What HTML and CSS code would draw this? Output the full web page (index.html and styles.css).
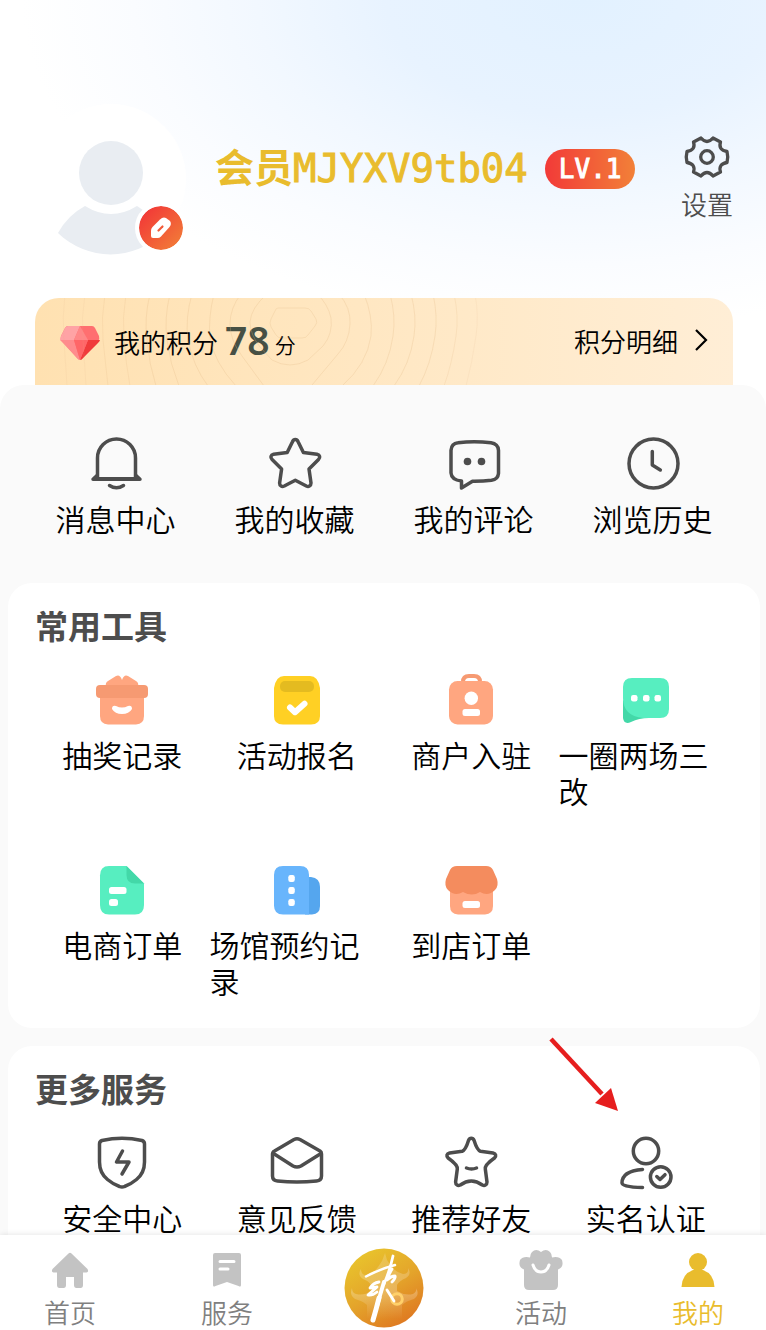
FILE: index.html
```
<!DOCTYPE html>
<html lang="zh-CN">
<head>
  <meta charset="UTF-8">
  <meta name="viewport" content="width=device-width, initial-scale=1.0">
  <title>我的</title>
  <link rel="stylesheet" href="styles.css">
</head>
<body>
  <main class="page">
    <header class="profile">
      <div class="avatar">
        <svg class="avatar-img" viewBox="0 0 150 150">
          <circle cx="75" cy="75" r="75" fill="#fff"/>
          <g fill="#e9edf2">
            <circle cx="75" cy="69" r="32"/>
            <path d="M49 102q26 16 52 0q14 8 26 27a75 75 0 0 1-105 0q10-18 27-27z"/>
          </g>
        </svg>
        <button class="edit" aria-label="编辑">
          <svg viewBox="0 0 44 44" width="44" height="44">
            <path d="M12 24.500q0-2 1.500-3.500L21 13.500q3-3 6-1.500l4 3q2 3-.5 6L22 30.500Q20.500 32 18.500 32H14q-2 0-2-2z" fill="#fff"/>
            <path d="M19.500 24.500l4-4" stroke="#f25a38" stroke-width="2.200" stroke-linecap="round"/>
          </svg>
        </button>
      </div>
      <h1 class="name"><b>会员</b>MJYXV9tb04</h1>
      <span class="level">LV.1</span>
      <button class="settings">
        <svg viewBox="0 0 46 46" width="46" height="46" fill="none" stroke="#4d4d4d" stroke-width="3.300" stroke-linejoin="round">
          <path d="M17 4Q23 11 29 4L36.500 8Q34 16 43 17.500Q44.500 23 43 28.500Q34 30 36.500 38L29 42Q23 35 17 42L9.500 38Q12 30 3 28.500Q1.500 23 3 17.500Q12 16 9.500 8Z"/>
          <circle cx="23" cy="23" r="6.300"/>
        </svg>
        设置
      </button>
    </header>

    <section class="points">
      <svg class="rings" viewBox="0 0 698 87" width="698" height="87" fill="none" stroke="#e2b988" stroke-opacity=".28">
        <path d="M243 10h27q4 0 6 3l5 8q2 4-1 7l-7 9q-2 3-6 3h-20q-4 0-6-3l-5-8q-2-4 0-8l4-8q1-3 3-3z"/>
        <path d="M232-4q-16 14-17 28 0 12 10 25l12 13q18 10 36 0l15-14q10-12 8-28-3-14-14-24"/>
        <path d="M206-4q-11 14-11 30 0 16 12 32l22 30M304-4q12 14 11 30-1 18-12 30l-26 31"/>
        <path d="M179-4q-6 24-4 44 4 24 26 48M329-4q9 22 7 42-4 28-29 50"/>
        <path d="M157-4q-7 24-4 46 5 26 20 46M355-4q6 22 3 42-4 28-20 50"/>
        <path d="M135-4q-6 24-3 46 3 24 12 46M376-4q6 22 3 42-4 28-20 50M115-4q-6 24-3 46 2 24 9 46M398-4q5 22 2 42-4 28-16 50"/>
        <path d="M91-4q-4 24-2 46 2 24 6 46M419-4q5 22 2 42-4 28-12 50M70-4q-4 24-2 46l5 46" stroke-opacity=".2"/>
        <path d="M440-4q4 22 1 42-4 28-10 50M50-4q-4 24-2 46l3 46M30-4q-3 24-1 46l3 46" stroke-opacity=".12"/>
      </svg>
      <svg class="gem" viewBox="0 0 40 34" width="40" height="34">
        <path d="M8 0h24q2 0 3 2l4 8q1 3-1 5L23 32q-3 3-6 0L2 15Q0 13 1 10l4-8q1-2 3-2z" fill="#ff6f70"/>
        <path d="M8 0h12l-6 14H0q0-2 1-4l4-8q1-2 3-2z" fill="#ffa3a5"/>
        <path d="M20 0l8 14H14z" fill="#ff8788"/>
        <path d="M0 14h14l6 20q-2 0-3-2L2 16z" fill="#ff8b8d"/>
        <path d="M28 14h12q0 1-2 3L23 32q-1 2-3 2z" fill="#f03b3b"/>
        <path d="M14 14h14l-8 20z" fill="#ff6668"/>
      </svg>
      <span>我的积分</span>
      <strong class="score">78</strong>
      <small class="unit">分</small>
      <a class="detail" href="#">积分明细
        <svg viewBox="0 0 14 24" width="14" height="24" fill="none" stroke="#000" stroke-width="2.200"><path d="M2 2l10 10L2 22"/></svg>
      </a>
    </section>

    <div class="content">
      <nav class="grid quick">
        <a class="item" href="#">
          <svg class="icon line" viewBox="0 0 56 56">
            <path d="M9.500 42V22a19 19 0 0 1 38 0v20"/>
            <path d="M9 39.500l-3.500 3.200h46L48 39.500M5 43.200h47"/>
            <path d="M21.500 49.500q7 4.500 14 0"/>
          </svg>
          <span>消息中心</span>
        </a>
        <a class="item" href="#">
          <svg class="icon line" viewBox="0 0 56 56">
            <path d="M25.500 5.700C26.800 2.700 29.800 2.700 31.100 5.700L36.400 16.500L50 18.300C53 19 53.500 21.500 51.500 23.500L42 33L44 47C44 50.200 41.500 51 39.300 50L28.300 44.300L17.300 50C15 51 12.600 50.200 12.600 47L14.600 33L5.100 23.500C3.100 21.500 3.600 19 6.600 18.300L20.200 16.500Z"/>
          </svg>
          <span>我的收藏</span>
        </a>
        <a class="item" href="#">
          <svg class="icon line" viewBox="0 0 56 56">
            <path d="M12 6.800q16-2.200 33 0 7 1 7.500 7.500v23q-.5 6-7 7-9 1-19 .9L15.500 52v-7Q5.500 44 5 37V14.300Q5.500 7.500 12 6.800z"/>
            <circle class="dot" cx="21.500" cy="25.500" r="3.800"/>
            <circle class="dot" cx="35.500" cy="25.500" r="3.800"/>
          </svg>
          <span>我的评论</span>
        </a>
        <a class="item" href="#">
          <svg class="icon line" viewBox="0 0 56 56">
            <circle cx="28.500" cy="27.500" r="24.500"/>
            <path d="M27.300 15.500V29l8 5"/>
          </svg>
          <span>浏览历史</span>
        </a>
      </nav>

      <section class="panel">
        <h2>常用工具</h2>
        <div class="grid">
          <a class="item" href="#">
            <svg class="icon" viewBox="0 0 56 56">
              <path d="M12 14q-1-3 2-5l8-5q4-2 6 4 2-6 6-4l8 5q3 2 2 5z" fill="#ffa680"/>
              <path d="M6 24h44v20q0 8-8 8.500H14Q6 52 6 44z" fill="#ffa680"/>
              <rect x="2" y="13" width="52" height="13" rx="4" fill="#f69a72"/>
              <path d="M18 37q0-4 4-3 6 3 12 0 4-1 4 3-3 5-10 5t-10-5z" fill="#fff"/>
            </svg>
            <span>抽奖记录</span>
          </a>
          <a class="item" href="#">
            <svg class="icon" viewBox="0 0 56 56">
              <path d="M5 16Q7 4 15 4h26q8 0 10 12v28q0 8.500-9 8.500H14q-9 0-9-8.500z" fill="#ffd024"/>
              <rect x="11" y="9" width="34" height="11" rx="5" fill="#e4bb20"/>
              <path d="M21 35.500l5 4.700 9.500-8.400" fill="none" stroke="#fff" stroke-width="6" stroke-linecap="round" stroke-linejoin="round"/>
            </svg>
            <span>活动报名</span>
          </a>
          <a class="item" href="#">
            <svg class="icon" viewBox="0 0 56 56">
              <path d="M20 10q0-6 6-6h5q6 0 6 6" fill="none" stroke="#f69a72" stroke-width="4"/>
              <rect x="6" y="9" width="44" height="43.500" rx="8.500" fill="#ffa680"/>
              <circle cx="28.300" cy="26.300" r="6.700" fill="#fff"/>
              <rect x="19.500" y="37" width="17.500" height="7" rx="2.500" fill="#fff"/>
            </svg>
            <span>商户入驻</span>
          </a>
          <a class="item" href="#">
            <svg class="icon" viewBox="0 0 56 56">
              <path d="M5 28v18q1 7 8 4 8-4 18-4z" fill="#43d8a8"/>
              <path d="M14 6h28q9 0 9 9v22q0 9-9 9H25Q5 44 5 26V15q0-9 9-9z" fill="#57eec0"/>
              <g fill="#fff">
                <rect x="13" y="23" width="6.500" height="6.500" rx="2.200"/>
                <rect x="25" y="23" width="6.500" height="6.500" rx="2.200"/>
                <rect x="36.500" y="23" width="6.500" height="6.500" rx="2.200"/>
              </g>
            </svg>
            <span>一圈两场三改</span>
          </a>
          <a class="item" href="#">
            <svg class="icon" viewBox="0 0 56 56">
              <path d="M15 4h17.500L50 21.500V43q0 9.500-9 9.500H15q-9 0-9-9.500V13.500Q6 4 15 4z" fill="#57eec0"/>
              <path d="M32.500 4L50 21.500h-9q-8.500 0-8.500-8.500z" fill="#43d8a8"/>
              <rect x="15" y="25" width="17.500" height="7" rx="2.500" fill="#fff"/>
              <rect x="15" y="37" width="9" height="7" rx="2.500" fill="#fff"/>
            </svg>
            <span>电商订单</span>
          </a>
          <a class="item" href="#">
            <svg class="icon" viewBox="0 0 56 56">
              <path d="M36 15h6q9 1 9 10v19q0 8-8 8.500h-7z" fill="#55a6ee"/>
              <path d="M14 4h17q9 0 9 9v39.500H14q-9 0-9-9V13q0-9 9-9z" fill="#68b5fc"/>
              <g fill="#fff">
                <rect x="19.300" y="13" width="6.500" height="7" rx="2.200"/>
                <rect x="19.300" y="25" width="6.500" height="7" rx="2.200"/>
                <rect x="19.300" y="37" width="6.500" height="7" rx="2.200"/>
              </g>
            </svg>
            <span>场馆预约记录</span>
          </a>
          <a class="item" href="#">
            <svg class="icon" viewBox="0 0 56 56">
              <path d="M7 26h43v18q0 8-8 8.500H15Q7 52 7 44z" fill="#ffa680"/>
              <path d="M14 4h29q5 0 7 4l4 9q2 7-2 11-7 7-15 2-8 5-17 0-8 5-15-2-4-4-2-11l4-9q2-4 7-4z" fill="#f48c5e"/>
              <rect x="19.500" y="39" width="17.500" height="7" rx="2.500" fill="#fff"/>
            </svg>
            <span>到店订单</span>
          </a>
        </div>
      </section>

      <section class="panel services">
        <h2>更多服务</h2>
        <div class="grid">
          <a class="item" href="#">
            <svg class="icon line" viewBox="0 0 56 56">
              <path d="M8 5.500q20-4.500 40 0 2.500.8 2.500 3.500v18q0 11-8 17.500-6 5-12 7-2.500 1-5 0-6-2-12-7-8-6.500-8-17.500V9q0-2.700 2.500-3.500z"/>
              <path d="M28.500 16l-6 11h12.500l-7 12"/>
            </svg>
            <span>安全中心</span>
          </a>
          <a class="item" href="#">
            <svg class="icon line" viewBox="0 0 56 56">
              <path d="M5.500 16L25 4.500q3-1.500 6 0L51 16q1.500 1 1.500 3v22q0 4.500-5 5-19.500 2-39 0-5-.5-5-5V19q0-2 2-3z"/>
              <path d="M4.500 18.500L24 31q4 2 8 0l20-12.500"/>
            </svg>
            <span>意见反馈</span>
          </a>
          <a class="item" href="#">
            <svg class="icon line" viewBox="0 0 56 56">
              <path d="M25.500 5.500C26.800 2.500 29.800 2.500 31.100 5.500Q34 15 37.500 16.300L50 18C53 18.700 53.500 21 51.500 23Q41.500 30 42.300 34L44 47C44 50.200 41.500 51 39.300 50Q28.300 42 17.300 50C15 51 12.600 50.200 12.600 47L14.300 34Q15 30 5.100 23C3.100 21 3.600 18.700 6.600 18L19.100 16.300Q22.600 15 25.500 5.500Z"/>
              <path d="M23.500 33q5 2 10 0"/>
            </svg>
            <span>推荐好友</span>
          </a>
          <a class="item" href="#">
            <svg class="icon line" viewBox="0 0 56 56">
              <circle cx="28" cy="16" r="12.700"/>
              <path d="M24.500 34.500Q4 36 4 48q0 4 20.500 4.500"/>
              <circle cx="42.700" cy="42" r="10.300"/>
              <path d="M38.800 41.500l3.200 3 5-4.800"/>
            </svg>
            <span>实名认证</span>
          </a>
        </div>
        <svg class="arrow" viewBox="0 0 70 74" width="70" height="74">
          <path d="M3 2l51 55" stroke="#e61e1e" stroke-width="4.500"/>
          <path d="M70 74L47 66l16-15z" fill="#e61e1e"/>
        </svg>
      </section>
    </div>
  </main>

  <nav class="tabbar">
    <a class="tab" href="#">
      <svg viewBox="0 0 44 40" width="44" height="40" fill="#c3c3c3"><path d="M20.500 1.500q1.500-1.500 3 0L39.500 17q1.500 3-1 3.500H35V33q0 3-2.500 3h-4Q26 36 26 33v-8h-8v8q0 3-2.500 3h-4Q9 36 9 33V20.500H5.500Q3 20 4.500 17z"/></svg>
      首页
    </a>
    <a class="tab" href="#">
      <svg viewBox="0 0 44 40" width="44" height="40"><path d="M8 3q0-2 2-2h24q2 0 2 2v30q0 2.500-2.500 1L22 30l-11.500 4Q8 35.500 8 33z" fill="#c3c3c3"/><path d="M15 9.500h14M15 17h8" stroke="#fff" stroke-width="3" stroke-linecap="round"/></svg>
      服务
    </a>
    <a class="tab home" href="#" aria-label="首选">
      <svg viewBox="0 0 80 80" width="80" height="80">
        <defs>
          <linearGradient id="gold" x1=".2" y1="0" x2=".8" y2="1">
            <stop offset="0" stop-color="#e9c62c"/>
            <stop offset=".5" stop-color="#e4a52b"/>
            <stop offset="1" stop-color="#de7420"/>
          </linearGradient>
          <linearGradient id="haze" x1="0" y1="0" x2="0" y2="1">
            <stop offset="0" stop-color="#fff" stop-opacity=".16"/>
            <stop offset=".6" stop-color="#fff" stop-opacity=".24"/>
            <stop offset="1" stop-color="#fff" stop-opacity="0"/>
          </linearGradient>
        </defs>
        <circle cx="40" cy="40" r="39.500" fill="url(#gold)"/>
        <path d="M41 5l2 7 4 6q4 6 12 8 6 0 5-6 4 6-2 10-7 3-9 7v6q8 5 16 3 4-2 3-6 4 7-2 11-8 2-12 6v14H23V57q-4-4-12-6-6-4-3-11 0 5 4 6 8 2 15-3v-6q-2-4-8-6-6-4-2-10 0 6 5 6 8-2 12-8l4-6z" fill="url(#haze)"/>
        <circle cx="53" cy="51" r="5.300" fill="none" stroke="#ffd06a" stroke-width="3"/>
        <g fill="none" stroke="#fff" stroke-linecap="round" stroke-linejoin="round">
          <path d="M22 28.500Q36 21 51 17" stroke-width="2.500"/>
          <path d="M49 8q-3 14-9 28" stroke-width="2.800"/>
          <path d="M40 34q-4 13-7 24" stroke-width="4"/>
          <path d="M35 50q-3 12-6 22" stroke-width="5"/>
          <path d="M35 34q-6 1-9 6l7-1-9 8q4 1 9-3" stroke-width="2.800"/>
          <path d="M48 21q-3 5-5 11 4-4 8-4 1 2-3 6" stroke-width="2.800"/>
          <path d="M43 42l7 11" stroke-width="2.800"/>
        </g>
      </svg>
    </a>
    <a class="tab" href="#">
      <svg viewBox="0 0 44 40" width="44" height="40"><path d="M22 0q-5-4-9 0-2 2-2 5.500Q4 4 1 8q-2 7 3 9l1 .5V33q0 5 5 5h24q5 0 5-5V17.500l1-.5q5-2 3-9-3-4-10-2.500Q33 2 31 0q-4-4-9 0z" fill="#c3c3c3"/><path d="M14 13q2 7 8 7t8-7" fill="none" stroke="#fff" stroke-width="3" stroke-linecap="round"/></svg>
      活动
    </a>
    <a class="tab active" href="#">
      <svg viewBox="0 0 44 40" width="44" height="40" fill="#e9bc2d"><circle cx="22" cy="10" r="9"/><path d="M5.500 35Q6 22 17 18h10q11 4 11.500 17z"/></svg>
      我的
    </a>
  </nav>
</body>
</html>
```
FILE: styles.css
```
* {
  margin: 0;
  padding: 0;
  box-sizing: border-box;
}

body {
  height: 100vh;
  display: flex;
  flex-direction: column;
  background: #fff;
  color: #000;
  font-family: "Noto Sans CJK SC", sans-serif;
  font-weight: 350;
  font-size: 26px;
}

a {
  color: inherit;
  text-decoration: none;
}

button {
  border: 0;
  background: none;
  color: inherit;
  font: inherit;
}

svg {
  display: block;
  flex-shrink: 0;
  overflow: visible;
}

.page {
  flex: 1;
  min-height: 0;
  overflow-y: auto;
  scrollbar-width: none;
  background: radial-gradient(ellipse 560px 330px at 76% 0, #e2f1ff 0, #e8f3ff 35%, #f2f8ff 58%, #fafcff 80%, #fff 100%) no-repeat;
}

/* profile */
.profile {
  display: flex;
  align-items: flex-start;
  padding: 104px 33px 44px 36px;
}

.avatar {
  position: relative;
  width: 150px;
  flex-shrink: 0;
}

.edit {
  position: absolute;
  right: -1px;
  bottom: 0;
  border: 4px solid #fff;
  border-radius: 50%;
  background: linear-gradient(135deg, #f23037, #f28238) padding-box;
}

.name {
  margin: 35px 0 0 29px;
  color: #e9bc2d;
  font-family: "DejaVu Sans Mono", "Noto Sans CJK SC", monospace;
  font-size: 39px;
  font-weight: 400;
  line-height: 52px;
  white-space: nowrap;
  -webkit-text-stroke: 1px #e9bc2d;
}

.name b {
  font-family: "Noto Sans CJK SC", sans-serif;
  -webkit-text-stroke: 0;
}

.level {
  margin: 45px 0 0 17px;
  padding: 0 14px;
  border-radius: 20px;
  background: linear-gradient(90deg, #f23a38, #f28038);
  color: #fff;
  font-family: "DejaVu Sans Mono", monospace;
  font-weight: 400;
  line-height: 40px;
  -webkit-text-stroke: 1px #fff;
}

.settings {
  display: flex;
  flex-direction: column;
  align-items: center;
  margin: 30px 0 0 auto;
  gap: 5px;
  color: #4d4d4d;
  line-height: 38px;
}

/* points bar */
.points {
  position: relative;
  display: flex;
  align-items: center;
  height: 87px;
  margin: 0 33px 0 35px;
  padding: 0 25px;
  overflow: hidden;
  border-radius: 24px 24px 0 0;
  background: linear-gradient(90deg, #ffe1b1, #ffeed6);
}

.rings {
  position: absolute;
  top: 0;
  left: 0;
}

.gem {
  margin: 3px 14px 0 0;
}

.score {
  margin: 0 5px 4px 7px;
  color: #475044;
  font-family: "Noto Sans", sans-serif;
  font-size: 39px;
  font-weight: 600;
}

.unit {
  padding-top: 4px;
  font-size: 21px;
}

.detail {
  display: flex;
  align-items: center;
  gap: 16px;
  margin-left: auto;
  padding-bottom: 3px;
}

/* sections */
.content {
  padding: 51px 6px 20px 8px;
  border-radius: 24px 24px 0 0;
  background: #fafafa;
}

.grid {
  display: grid;
  grid-template-columns: repeat(4, 1fr);
  row-gap: 54px;
}

.quick {
  margin: 0 18px 47px;
}

.item {
  display: flex;
  flex-direction: column;
  align-items: center;
  gap: 8px;
  font-size: 30px;
  line-height: 36px;
}

.icon {
  width: 56px;
  height: 56px;
}

.line {
  fill: none;
  stroke: #4d4d4d;
  stroke-width: 3.5px;
  stroke-linecap: round;
  stroke-linejoin: round;
}

.dot {
  fill: #4d4d4d;
  stroke: none;
}

.panel {
  position: relative;
  margin-bottom: 18px;
  padding: 22px 27px 30px;
  border-radius: 24px;
  background: #fff;
}

.panel h2 {
  margin-bottom: 27px;
  color: #4d4d4d;
  font-size: 33px;
  font-weight: 700;
  line-height: 40px;
}

.arrow {
  position: absolute;
  top: -9px;
  right: 142px;
}

/* bottom tabs */
.tabbar {
  z-index: 1;
  display: grid;
  grid-template-columns: repeat(5, 80px);
  justify-content: space-between;
  height: 95px;
  padding: 0 28px 0 30px;
  overflow: hidden;
  background: #fff;
  box-shadow: 0 0 6px rgba(0, 0, 0, 0.12);
}

.tab {
  display: flex;
  flex-direction: column;
  align-items: center;
  padding-top: 17px;
  gap: 2px;
  color: #808080;
  line-height: 36px;
}

.home {
  padding-top: 13px;
}

.active {
  color: #e9bc2d;
}
```
